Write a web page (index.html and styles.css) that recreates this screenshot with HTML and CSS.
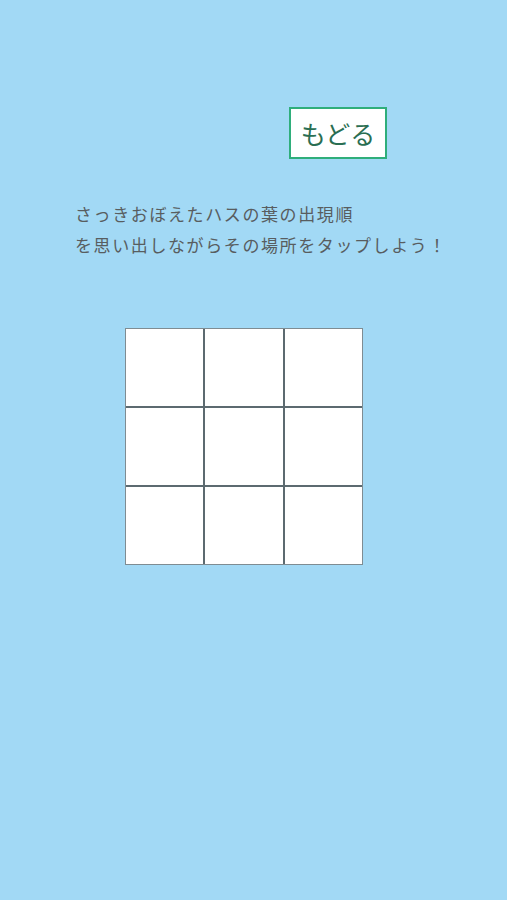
FILE: index.html
```html
<!DOCTYPE html>
<html lang="ja">
<head>
<meta charset="utf-8">
<link rel="stylesheet" href="styles.css">
</head>
<body>
<div class="screen">
  <div class="top">
    <button class="back">もどる</button>
  </div>
  <p class="message">さっきおぼえたハスの葉の出現順<br>を思い出しながらその場所をタップしよう！</p>
  <div class="board">
    <div class="cell"></div><div class="cell"></div><div class="cell"></div>
    <div class="cell"></div><div class="cell"></div><div class="cell"></div>
    <div class="cell"></div><div class="cell"></div><div class="cell"></div>
  </div>
</div>
</body>
</html>
```
FILE: styles.css
```css
html, body {
  margin: 0;
  padding: 0;
  background: #a2d9f5;
}
.screen {
  width: 507px;
  height: 900px;
  display: flex;
  flex-direction: column;
  font-family: "Noto Sans CJK JP", "Noto Sans", sans-serif;
}
.top {
  display: flex;
  padding: 107px 0 0 289px;
}
.back {
  box-sizing: border-box;
  width: 98px;
  height: 52px;
  border: 2px solid #2fae7b;
  background: #ffffff;
  color: #2a6e52;
  font-family: "Noto Sans CJK JP", sans-serif;
  font-size: 25px;
  padding: 0;
  line-height: 1;
}
.message {
  margin: 39px 0 0 75px;
  font-size: 17px;
  letter-spacing: 1.6px;
  line-height: 31px;
  color: #585d60;
}
.board {
  margin: 68px 0 0 125px;
  width: 238px;
  height: 237px;
  box-sizing: border-box;
  display: grid;
  grid-template-columns: repeat(3, 1fr);
  grid-template-rows: repeat(3, 1fr);
  gap: 2px;
  background: #5c6a70;
  border: 1px solid #7f8c92;
}
.cell {
  background: #ffffff;
}
```
